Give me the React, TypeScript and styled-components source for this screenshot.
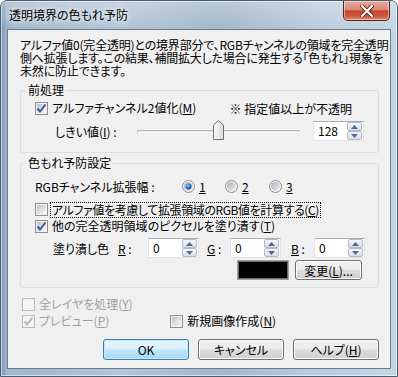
import React, { useId } from 'react';
import styled, { createGlobalStyle } from 'styled-components';

const Global = createGlobalStyle`
  html, body { margin: 0; padding: 0; background: #ffffff; }
  body {
    font-family: "Noto Sans CJK JP", "Liberation Sans", sans-serif;
    font-size: 12px;
    color: #000;
    font-feature-settings: "palt";
  }
  * { box-sizing: border-box; }
`;

const Window = styled.div`
  width: 398px;
  height: 377px;
  display: flex;
  flex-direction: column;
  border: 1px solid #4b5d70;
  border-radius: 7px 7px 0 0;
  padding: 0 6px 7px;
  background:
    linear-gradient(180deg, rgba(255,255,255,0.25) 0px, rgba(255,255,255,0) 28px),
    linear-gradient(90deg, #7f98b2 0px, #9fb5cb 6px, #b4c6d8 30%, #a3b7cb 55%, #bcccdd 80%, #c6d5e4 100%);
  box-shadow: inset 0 0 0 1px rgba(255,255,255,0.55);
`;

const TitleBar = styled.div`
  height: 28px;
  display: flex;
  align-items: flex-start;
  padding-left: 2px;
`;

const TitleText = styled.div`
  line-height: 28px;
  font-size: 12px;
  color: #000;
  text-shadow: 0 0 6px rgba(255,255,255,0.95), 0 0 10px rgba(255,255,255,0.8);
`;

const CloseButton = styled.div`
  margin-left: auto;
  margin-right: 1px;
  width: 47px;
  height: 20px;
  display: flex;
  align-items: center;
  justify-content: center;
  border: 1px solid #5a231a;
  border-top: none;
  border-radius: 0 0 5px 5px;
  background: linear-gradient(180deg, #e9a99a 0%, #dc8a77 45%, #c7452e 52%, #cf5a3f 80%, #e08a6a 100%);
  box-shadow: inset 0 0 0 1px rgba(255,255,255,0.45);
`;

const Client = styled.div`
  flex: 1;
  display: flex;
  flex-direction: column;
  background: #f0f0f0;
  border: 1px solid #6a7b8d;
  padding: 8px 11px 0 12px;
`;

const Description = styled.p`
  margin: 0;
  line-height: 13px;
  height: 39px;
  white-space: nowrap;
  letter-spacing: -0.2px;
`;

const Group = styled.fieldset<{ $top: number }>`
  margin: ${p => p.$top}px 0 0;
  padding: 0;
  border: 1px solid #d5dfe5;
  border-radius: 3px;
  min-inline-size: 0;
`;

const Legend = styled.legend`
  margin-left: 5px;
  padding: 0 2px;
  line-height: 14px;
  font-size: 12px;
`;

const GroupBody = styled.div<{ $pt: number; $pb: number }>`
  display: flex;
  flex-direction: column;
  padding: ${p => p.$pt}px 12px ${p => p.$pb}px 14px;
`;

const Row = styled.div<{ $h: number; $mt?: number; $pl?: number }>`
  display: flex;
  align-items: center;
  height: ${p => p.$h}px;
  margin-top: ${p => p.$mt ?? 0}px;
  padding-left: ${p => p.$pl ?? 0}px;
  white-space: nowrap;
`;

const Note = styled.span`
  margin-left: auto;
  margin-right: 14px;
`;

const FixedLabel = styled.span<{ $w: number; $ml?: number }>`
  display: inline-block;
  width: ${p => p.$w}px;
  margin-left: ${p => p.$ml ?? 0}px;
  flex: none;
`;

const CheckLabel = styled.label<{ $disabled?: boolean }>`
  display: flex;
  align-items: center;
  gap: 3px;
  color: ${p => (p.$disabled ? '#a0a0a0' : '#000')};
`;

const CheckText = styled.span<{ $focus?: boolean; $tight?: boolean }>`
  line-height: 14px;
  padding: 0 1px;
  letter-spacing: ${p => (p.$tight ? '-0.4px' : '0')};
  outline: ${p => (p.$focus ? '1px dotted #000' : 'none')};
  outline-offset: 0;
`;

const Box = styled.span<{ $disabled?: boolean }>`
  width: 13px;
  height: 13px;
  flex: none;
  display: flex;
  align-items: center;
  justify-content: center;
  border: 1px solid ${p => (p.$disabled ? '#bcbcbc' : '#8e8f8f')};
  background: #f4f4f4;
  padding: 1px;
`;

const BoxInner = styled.span<{ $disabled?: boolean }>`
  width: 9px;
  height: 9px;
  display: flex;
  align-items: center;
  justify-content: center;
  background: ${p =>
    p.$disabled
      ? '#f4f4f4'
      : 'linear-gradient(135deg, #b9bdc3 0%, #dadcdf 45%, #f6f6f6 100%)'};
`;

const Checkbox: React.FC<{ checked?: boolean; disabled?: boolean }> = ({ checked, disabled }) => (
  <Box $disabled={disabled}>
    <BoxInner $disabled={disabled}>
      {checked && (
        <svg width="11" height="11" viewBox="0 0 11 11" style={{ overflow: 'visible' }}>
          <polyline
            points="1.5,5.5 4,8.5 9.5,1.5"
            fill="none"
            stroke={disabled ? '#b5b5b5' : '#3a5a98'}
            strokeWidth="2"
          />
        </svg>
      )}
    </BoxInner>
  </Box>
);

const RadioGroupRow = styled.div`
  display: flex;
  align-items: center;
`;

const RadioItem = styled.label<{ $w: number }>`
  display: flex;
  align-items: center;
  gap: 4px;
  width: ${p => p.$w}px;
`;

const Radio: React.FC<{ checked?: boolean }> = ({ checked }) => {
  const id = useId().replace(/:/g, '');
  return (
    <svg width="13" height="13" viewBox="0 0 13 13">
      <defs>
        <linearGradient id={`r${id}`} x1="0" y1="0" x2="1" y2="1">
          <stop offset="0" stopColor="#a7acb2" />
          <stop offset="1" stopColor="#f4f4f4" />
        </linearGradient>
        <radialGradient id={`d${id}`} cx="0.4" cy="0.35" r="0.7">
          <stop offset="0" stopColor="#9fd6ff" />
          <stop offset="0.5" stopColor="#2b7cd2" />
          <stop offset="1" stopColor="#14427a" />
        </radialGradient>
      </defs>
      <circle cx="6.5" cy="6.5" r="6" fill="#f4f4f4" stroke="#8e8f8f" strokeWidth="1" />
      <circle cx="6.5" cy="6.5" r="4.5" fill={`url(#r${id})`} />
      {checked && <circle cx="6.5" cy="6.5" r="3" fill={`url(#d${id})`} />}
    </svg>
  );
};

const SpinWrap = styled.div`
  display: flex;
  height: 20px;
  flex: none;
`;

const SpinField = styled.div`
  width: 34px;
  height: 20px;
  background: #fff;
  border: 1px solid #e2e3ea;
  border-top-color: #abadb3;
  border-right: none;
  padding-left: 4px;
  line-height: 18px;
`;

const SpinButtons = styled.div`
  width: 17px;
  height: 20px;
  display: flex;
  flex-direction: column;
  background: #fff;
  border: 1px solid #e2e3ea;
  border-top-color: #abadb3;
  border-left: none;
  padding: 0 1px 0 0;
`;

const SpinHalf = styled.div`
  flex: 1;
  display: flex;
  align-items: center;
  justify-content: center;
  border: 1px solid #b4bac2;
  border-radius: 2px;
  background: linear-gradient(180deg, #f6f8fa 0%, #e6ebf1 50%, #d6dde6 100%);
`;

const Spin: React.FC<{ value: string }> = ({ value }) => (
  <SpinWrap>
    <SpinField>{value}</SpinField>
    <SpinButtons>
      <SpinHalf>
        <svg width="7" height="4" viewBox="0 0 7 4"><polygon points="0,4 7,4 3.5,0" fill="#4d6a9a" /></svg>
      </SpinHalf>
      <SpinHalf>
        <svg width="7" height="4" viewBox="0 0 7 4"><polygon points="0,0 7,0 3.5,4" fill="#4d6a9a" /></svg>
      </SpinHalf>
    </SpinButtons>
  </SpinWrap>
);

const Slider = styled.div`
  position: relative;
  width: 163px;
  height: 20px;
  flex: none;
  display: flex;
  align-items: center;
`;

const Track = styled.div`
  width: 100%;
  height: 3px;
  border-top: 1px solid #b8b8b8;
  border-left: 1px solid #b8b8b8;
  border-bottom: 1px solid #ffffff;
  background: #e7eaea;
`;

const Thumb = styled.svg`
  position: absolute;
  left: 76px;
  top: -1px;
`;

const FillLabel = styled.span`
  width: 65px;
  margin-left: 18px;
  flex: none;
`;

const ColorAxis = styled.span<{ $w: number; $ml?: number }>`
  width: ${p => p.$w}px;
  margin-left: ${p => p.$ml ?? 0}px;
  flex: none;
`;

const Swatch = styled.div`
  width: 52px;
  height: 20px;
  background: #000;
  border: 1px solid #a0a0a0;
  box-shadow: inset 0 0 0 1px #6d6d6d;
`;

const Button = styled.div<{ $w: number; $primary?: boolean }>`
  width: ${p => p.$w}px;
  height: ${p => (p.$primary !== undefined ? 21 : 20)}px;
  display: flex;
  align-items: center;
  justify-content: center;
  border: 1px solid ${p => (p.$primary ? '#3c7fb1' : '#707070')};
  border-radius: 3px;
  background: ${p =>
    p.$primary
      ? 'linear-gradient(180deg, #eaf6fd 0%, #d9f0fc 48%, #bee6fd 52%, #a7d9f5 100%)'
      : 'linear-gradient(180deg, #f2f2f2 0%, #ebebeb 48%, #dddddd 52%, #cfcfcf 100%)'};
  box-shadow: inset 0 0 0 1px ${p => (p.$primary ? '#c6e8fb' : '#fcfcfc')};
  flex: none;
`;

const ButtonRow = styled.div`
  display: flex;
  justify-content: flex-end;
  gap: 9px;
  margin-top: 10px;
`;

const SwatchRow = styled.div`
  display: flex;
  align-items: center;
  gap: 6px;
  height: 20px;
  margin-top: 2px;
  padding-left: 202px;
`;

const Spacer = styled.span<{ $w: number }>`
  width: ${p => p.$w}px;
  flex: none;
`;

export default function App() {
  return (
    <>
      <Global />
      <Window>
        <TitleBar>
          <TitleText>透明境界の色もれ予防</TitleText>
          <CloseButton>
            <svg width="14" height="12" viewBox="0 0 14 12">
              <path d="M2 1 L12 11 M12 1 L2 11" stroke="#5a1f16" strokeWidth="4" strokeLinecap="square" />
              <path d="M2 1 L12 11 M12 1 L2 11" stroke="#ffffff" strokeWidth="2.2" strokeLinecap="square" />
            </svg>
          </CloseButton>
        </TitleBar>
        <Client>
          <Description>
            アルファ値0(完全透明)との境界部分で、RGBチャンネルの領域を完全透明
            <br />
            側へ拡張します。この結果、補間拡大した場合に発生する「色もれ」現象を
            <br />
            未然に防止できます。
          </Description>

          <Group $top={6}>
            <Legend>前処理</Legend>
            <GroupBody $pt={3} $pb={11}>
              <Row $h={16}>
                <CheckLabel>
                  <Checkbox checked />
                  <CheckText>アルファチャンネル2値化(<u>M</u>)</CheckText>
                </CheckLabel>
                <Note>※ 指定値以上が不透明</Note>
              </Row>
              <Row $h={20} $mt={5}>
                <FixedLabel $w={82} $ml={20}>しきい値(<u>I</u>) :</FixedLabel>
                <Slider>
                  <Track />
                  <Thumb width="11" height="20" viewBox="0 0 11 20">
                    <defs>
                      <linearGradient id="thumbg" x1="0" y1="0" x2="1" y2="0">
                        <stop offset="0" stopColor="#fafafa" />
                        <stop offset="1" stopColor="#d9d9d9" />
                      </linearGradient>
                    </defs>
                    <path d="M0.5 19.5 L0.5 5 L5.5 0.5 L10.5 5 L10.5 19.5 Z" fill="url(#thumbg)" stroke="#707070" strokeLinejoin="round" />
                  </Thumb>
                </Slider>
                <Spacer $w={13} />
                <Spin value="128" />
              </Row>
            </GroupBody>
          </Group>

          <Group $top={3}>
            <Legend>色もれ予防設定</Legend>
            <GroupBody $pt={8} $pb={7}>
              <Row $h={16}>
                <FixedLabel $w={147}>RGBチャンネル拡張幅 :</FixedLabel>
                <RadioGroupRow>
                  <RadioItem $w={43}><Radio checked /><u>1</u></RadioItem>
                  <RadioItem $w={44}><Radio /><u>2</u></RadioItem>
                  <RadioItem $w={30}><Radio /><u>3</u></RadioItem>
                </RadioGroupRow>
              </Row>
              <Row $h={17} $mt={7}>
                <CheckLabel>
                  <Checkbox />
                  <CheckText $focus $tight>アルファ値を考慮して拡張領域のRGB値を計算する(<u>C</u>)</CheckText>
                </CheckLabel>
              </Row>
              <Row $h={16}>
                <CheckLabel>
                  <Checkbox checked />
                  <CheckText>他の完全透明領域のピクセルを塗り潰す(<u>T</u>)</CheckText>
                </CheckLabel>
              </Row>
              <Row $h={20} $mt={4}>
                <FillLabel>塗り潰し色</FillLabel>
                <ColorAxis $w={30}><u>R</u> :</ColorAxis>
                <Spin value="0" />
                <ColorAxis $w={23} $ml={8}><u>G</u> :</ColorAxis>
                <Spin value="0" />
                <ColorAxis $w={23} $ml={10}><u>B</u> :</ColorAxis>
                <Spin value="0" />
              </Row>
              <SwatchRow>
                <Swatch />
                <Button $w={67}>変更(<u>L</u>)...</Button>
              </SwatchRow>
            </GroupBody>
          </Group>

          <Row $h={16} $mt={8} $pl={2}>
            <CheckLabel $disabled>
              <Checkbox disabled />
              <CheckText>全レイヤを処理(<u>Y</u>)</CheckText>
            </CheckLabel>
          </Row>
          <Row $h={16} $mt={1} $pl={2}>
            <CheckLabel $disabled>
              <Checkbox checked disabled />
              <CheckText>プレビュー(<u>P</u>)</CheckText>
            </CheckLabel>
            <Spacer $w={60} />
            <CheckLabel>
              <Checkbox />
              <CheckText>新規画像作成(<u>N</u>)</CheckText>
            </CheckLabel>
          </Row>
          <ButtonRow>
            <Button $w={86} $primary>OK</Button>
            <Button $w={86} $primary={false}>キャンセル</Button>
            <Button $w={86} $primary={false}>ヘルプ(<u>H</u>)</Button>
          </ButtonRow>
        </Client>
      </Window>
    </>
  );
}
